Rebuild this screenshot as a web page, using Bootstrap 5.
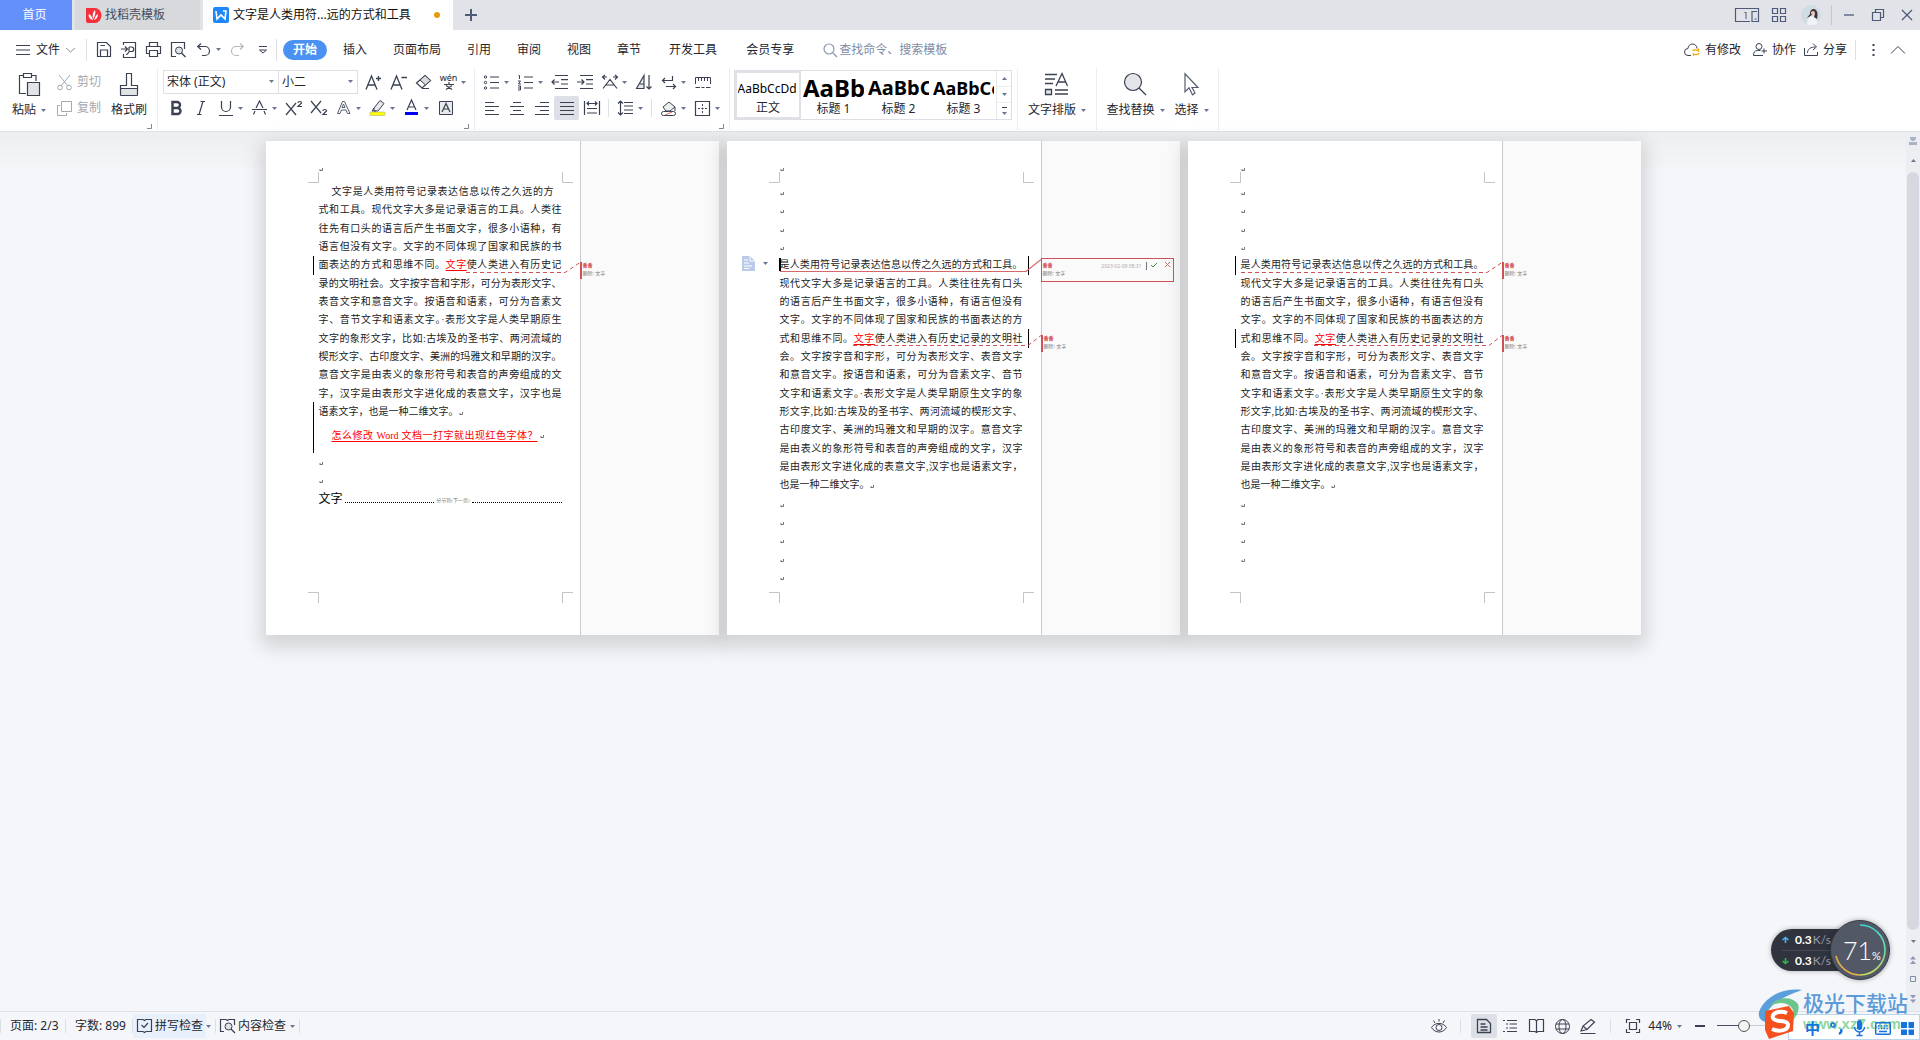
<!DOCTYPE html>
<html lang="zh-CN">
<head>
<meta charset="utf-8">
<meta name="viewport" content="width=device-width, initial-scale=1">
<title>WPS 文字</title>
<link rel="stylesheet" href="https://cdn.jsdelivr.net/npm/bootstrap@5.3.0/dist/css/bootstrap.min.css">
<style>
body{font:12px/18px "Noto Sans","Noto Sans CJK SC",sans-serif;color:#23262f;background:#f5f6f9;overflow:hidden}
button,input,select{font:inherit;color:inherit}
button{background:none;border:0;padding:0}
svg{display:block;flex:none;fill:none;stroke:#3a4152;overflow:visible}
.thin{width:1px;background:#dcdfe4;flex:none}
/* title bar */
.titlebar{height:30px;background:#e1e3e8}
.doc-tab{height:30px;gap:4px}
.tab-home{width:72px;background:#6490fb;color:#fff;padding-right:3px}
.tab-shell{width:125px;background:#d7d9dd;color:#474d5b;padding-left:11px;margin:0 3px}
.tab-doc{width:250px;background:#fff;color:#111;padding:0 13px 0 10px}
.dirty{width:6px;height:6px;border-radius:50%;background:#e99a0c}
.titlebar svg{stroke:#4d5b78}
.win{gap:18px;padding-right:8px}
/* menu row */
.menu-row{height:38px;background:#fff;padding-top:1px}
.quick{padding-left:4px;width:189px}
.quick button{width:25px;height:26px;display:flex;align-items:center;justify-content:center}
.menu-link{padding:0 13px;color:#23262f;text-decoration:none}
.menu-link.on{background:#4991f2;color:#fff;font-weight:700;border-radius:10px;padding:1px 10px;margin:0 3px}
.menu-link.wide{padding:0 14px 0 15px}
.cmd-search{border:0;outline:0;width:140px;padding:0;background:none;color:#7f8ba3}
.cmd-search::placeholder{color:#7f8ba3;opacity:1}
/* ribbon */
.ribbon{height:64px;background:#fff;border-bottom:1px solid #e0e2e5}
.grp{border-right:1px solid #eceef1;height:62px;position:relative;flex:none}
.corner-btn{position:absolute;right:5px;bottom:1px}
.ib{width:25px;height:24px;display:flex;align-items:center;justify-content:center;flex:none}
.ib.on{background:#dde1e7;border-radius:2px}
.dd{width:9px;height:24px;display:flex;align-items:center;flex:none}
.slot{width:9px;height:18px;display:flex;justify-content:center}
.big{display:flex;flex-direction:column;align-items:center;gap:5px;padding-top:5px}
.lab{display:flex;align-items:center;gap:5px;white-space:nowrap}
.off{color:#a6a8ad}
.off svg{stroke:#a6a8ad}
.combo{height:24px;border:1px solid #dddfe3;background:#fff;border-radius:0;outline:0;appearance:none;padding:0 3px}
.combo-wrap{position:relative}
.combo-wrap svg{position:absolute;right:5px;top:10px}
.gallery{border:1px solid #dddfe4;height:50px;width:278px;margin:2px 5px 0 4px}
.sty{width:65px;height:48px;display:flex;flex-direction:column;align-items:center;overflow:hidden;color:#23262f;flex:none}
.sty.on{border:2px solid #dfe1e6;width:66px}
.sample{height:29px;line-height:34px;color:#000;width:61px;overflow:hidden;white-space:nowrap;font-weight:700;text-align:left}
.sty.on .sample{font-size:12px;font-weight:400;height:27px;line-height:31px}
.s1{font-size:24px}.s2{font-size:20px}.s3{font-size:18px}
.spin{width:15px;border-left:1px solid #e6e8ec}
.spin button{height:16px;width:14px;display:flex;align-items:center;justify-content:center;border-bottom:1px solid #eceef1}
.flip{rotate:180deg}
.pinyin{font-size:9px;line-height:8px}
/* paper */
.desk{padding-top:9px;gap:8px;background:linear-gradient(#eceef0,#f5f6f9 40px)}
.paper{width:453px;height:494px;background:#fff;box-shadow:0 7px 18px 5px rgba(0,0,0,.14);position:relative}
.sheet{width:314px;padding:26px 0 0 53px}
.notes{background:#fafafa;border-left:1px solid #c9cbce;padding-top:121px}
.copy{width:243px;font-family:"Liberation Serif","Noto Sans CJK SC",serif;font-size:10px;color:#222}
.rows{display:grid;grid-auto-rows:1fr;margin-top:11px}
.r13{height:238px}.r21{height:385px}.r22{height:403px}
.rows>div{display:flex;align-items:center;white-space:nowrap;line-height:18px}
.rows svg{margin-top:3px}
.rows span{width:243px;text-align:justify;text-align-last:justify}
.rows .first{width:222px;margin-left:13px}
.rows .end{width:auto;text-align-last:left}
.ins{color:#f00;text-decoration:underline;text-underline-offset:2px}
.red-line{padding:6px 0 12px 13px;height:36px;gap:2px}
.red-line .ins{width:206px;white-space:nowrap;text-align-last:justify}
.blank-rows{padding:4px 0 6px}
.blank-rows svg+svg{margin-top:13px}
.section-row{height:18px;font-size:12px;color:#000;gap:2px}
.section-row i{flex:1;border-top:1px dotted #000;margin-top:7px}
.section-row small{font-size:5px;color:#777;margin-top:4px}
.memo{height:17px;border-left:2px solid #cf5157;padding-left:1px;font-size:5px;line-height:8px;color:#777;margin-bottom:56px;margin-left:-1px}
.memo b{color:#cc3038;display:block;line-height:7px}
.memo.open{border:1px solid #cf5157;width:133px;height:24px;margin:-4px 0 53px -1px;padding:3px 3px 0 1px}
.memo time{color:#aaa}
.ink{position:absolute;left:0;top:0;pointer-events:none}
.anchor{position:absolute;left:15px;top:115px}
/* scroll bar */
.rail{width:14px;background:#eceef2;padding-top:5px}
.rail .thumb{width:12px;background:#d5d8e1;border-radius:6px}
.rail svg{fill:#8d99b5;stroke:none}
/* status bar */
.status{height:29px;border-top:1px solid #dfe1e6;background:#f5f6f9}
.status .thin{height:14px}
.status .ib{width:26px}
.zoom{appearance:none;width:92px;height:14px;margin-left:12px;background:linear-gradient(#434d66,#434d66) 0 6px/24px 1px no-repeat,linear-gradient(#c9ccd4,#c9ccd4) 0 6px/100% 1px no-repeat}
.zoom::-webkit-slider-thumb{appearance:none;width:12px;height:12px;border:1px solid #555;border-radius:50%;background:#f3f3f3}
/* floating desktop widgets */
.meter{position:absolute;right:30px;bottom:60px;width:119px;height:60px}
.meter .speeds{width:90px;height:42px;border-radius:21px 0 0 21px;background:#2f343f;color:#fff;padding:1px 0 0 11px;box-shadow:0 0 5px rgba(0,0,0,.3)}
.speeds div{height:20px;gap:6px;line-height:20px;font-family:Lato,sans-serif;font-weight:700}
.speeds div+div{border-top:1px solid #454a55}
.speeds em{font-style:normal;font-weight:400;color:#9a9ea8;margin-left:1px}
.ball{position:absolute;right:0;top:0;width:60px;height:60px;border-radius:50%;background:#525866;border:1px solid #353a46;box-shadow:0 0 5px rgba(0,0,0,.35);color:#fff;font:300 25px/58px Lato,sans-serif;padding-left:12px}
.ball small{font-size:11px;font-weight:400}
.ball svg{position:absolute;left:3px;top:3px}
.mark-box{position:absolute;right:0;bottom:0;width:162px;height:52px}
.mark-name{position:absolute;left:45px;top:0;font:500 21px/28px "Noto Sans CJK SC",sans-serif;color:#5b9bd8;white-space:nowrap}
.mark-url{position:absolute;left:45px;top:26px;font:700 15px/20px "Liberation Sans",sans-serif;color:#8fd6a2}
.ime{position:absolute;right:0;bottom:0;width:132px;height:26px;background:linear-gradient(90deg,#fff,#fbfcff);border:1px solid #b9d5ee}
.ime-keys{position:absolute;right:6px;bottom:2px;gap:10px;color:#1673dc;font:700 15px/20px "Noto Sans CJK SC",sans-serif}
</style>
<script src="https://cdn.jsdelivr.net/npm/bootstrap@5.3.0/dist/js/bootstrap.bundle.min.js"></script>
</head>
<body>
<svg width="0" height="0" class="position-absolute">
<symbol id="car" viewBox="0 0 5 3"><path d="M0 0h5L2.500 3z" fill="#6b7690" stroke="none"/></symbol>
<symbol id="ret" viewBox="0 0 5 5"><path d="M3.500 1v2.500H1M1 2v2" stroke="#666" stroke-width=".9"/></symbol>
<symbol id="cnr" viewBox="0 0 5 5"><path d="M4.500 0v4.500H0" stroke="#7d8799"/></symbol>
</svg>
<div class="vh-100 d-flex flex-column position-relative">

<header class="titlebar d-flex">
  <button class="doc-tab tab-home">首页</button>
  <button class="doc-tab tab-shell d-flex align-items-center">
    <svg width="15" height="15"><path d="M0 0h9a6 7 0 0 1 0 15H2a2 2 0 0 1-2-2z" fill="#f5303d" stroke="none"/><path d="M7 12C3 11 2 8 3 6c2 1 3 3 4 6zM7 11C6 7 7 4 9 2c1 3 0 6-2 9zM8 12c1-3 2-5 4-6 0 3-1 5-4 6z" fill="#fff" stroke="none"/></svg>
    <span>找稻壳模板</span></button>
  <button class="doc-tab tab-doc d-flex align-items-center">
    <svg width="16" height="16"><rect width="16" height="16" rx="2" fill="#1e88fb" stroke="none"/><path d="M3 4l1 8 4-4 4 4 1-8h-3" stroke="#fff" stroke-width="1.600"/></svg>
    <span>文字是人类用符...远的方式和工具</span><span class="dirty ms-auto"></span></button>
  <button class="ms-2 px-1" aria-label="新建"><svg width="12" height="12"><path d="M6 0v12M0 6h12" stroke-width="2"/></svg></button>
  <div class="win d-flex align-items-center ms-auto">
    <button aria-label="窗口">
      <svg width="24" height="14"><path d="M15 13.500H.5V.5h23v13H17V3.500h5" stroke-width="1.200"/><path d="M11 4v7M9.500 4.500H11M19.500 11h2" /></svg></button>
    <svg width="14" height="14" style="margin:0 -3px 0 -5px"><path d="M.5.5h5v5h-5zM8.500.5h5v5h-5zM.5 8.500h5v5h-5zM8.500 8.500h5v5h-5z" stroke-width="1.200"/></svg>
    <svg width="20" height="20" style="margin:0 -8px 0 0"><circle cx="10" cy="10" r="10" fill="#cfdde2" stroke="none"/><path d="M6 20c0-5 1-8 3-9l5 1 3 6-4 2z" fill="#eef3f5" stroke="none"/><path d="M9 9c0-4 2-5 4-5 4 1 4 6 3 10l-3-2 1-3-2 0-4 3-2 1z" fill="#3c3338" stroke="none"/><circle cx="12" cy="8" r="2" fill="#eac5b8" stroke="none"/></svg>
    <span class="thin" style="height:20px;background:#c3c7cf"></span>
    <button aria-label="最小化" style="margin-left:-6px"><svg width="10" height="10"><path d="M0 5h10" stroke-width="1.300"/></svg></button>
    <button aria-label="还原"><svg width="12" height="12"><path d="M.5 3.500h8v8h-8zM3.500 3V.5h8v8H9" stroke-width="1.200"/></svg></button>
    <button aria-label="关闭"><svg width="10" height="10"><path d="M0 0l10 10M10 0L0 10" stroke-width="1.300"/></svg></button>
  </div>
</header>

<nav class="menu-row d-flex align-items-center">
  <button class="d-flex align-items-center ps-3" style="gap:6px;width:86px">
    <svg width="14" height="12"><path d="M0 1.500h14M0 6h14M0 10.500h14"/></svg>文件
    <svg width="9" height="6"><path d="M0 1l4.500 4L9 1" stroke="#8a909c"/></svg></button>
  <span class="thin" style="height:22px"></span>
  <div class="quick d-flex">
    <button aria-label="保存"><svg width="15" height="15"><path d="M1.500.5h9l4 4v10h-13zM4.500 14v-6h7v6M4.500 3.500H9" stroke-width="1.200"/></svg></button>
    <button aria-label="输出为PDF"><svg width="16" height="16"><path d="M2.500 3V.5h12v15h-12V12M0 7h6M4 4.500L6.500 7 4 9.500M8 5h2.500a2 2 0 0 1 0 4.500h-2c-1 0-1 3-3.500 3M8 5v4" stroke-width="1.200"/></svg></button>
    <button aria-label="打印"><svg width="15" height="15"><path d="M3.500 4V.5h8V4M3 11.500H.5v-7h14v7H12M3.500 8.500h8v6h-8z" stroke-width="1.200"/></svg></button>
    <button aria-label="打印预览"><svg width="15" height="15"><path d="M5 14.500H.5V.5h13V7" stroke-width="1.200"/><circle cx="8" cy="8.500" r="3.500" fill="#dfe1e5"/><path d="M10.500 11l4 4" stroke-width="1.400"/></svg></button>
    <button aria-label="撤销"><svg width="13" height="13"><path d="M4 .5L.7 3.500 4 6.500M1 3.500h7a4 4 0 0 1 0 9H5" stroke-width="1.200"/></svg></button>
    <span class="dd align-self-center"><svg width="5" height="3"><use href="#car"/></svg></span>
    <button aria-label="恢复"><svg width="13" height="13"><path d="M9 .5l3.300 3L9 6.500M12 3.500H5a4 4 0 0 0 0 9h3" stroke="#b5b8be" stroke-width="1.200"/></svg></button>
    <button aria-label="自定义"><svg width="8" height="8"><path d="M0 .5h8M.5 4h7L4 7z"/></svg></button>
  </div>
  <span class="thin" style="height:22px;margin-right:3px"></span>
  <a class="menu-link on" href="#">开始</a><a class="menu-link" href="#">插入</a><a class="menu-link" href="#">页面布局</a><a class="menu-link" href="#">引用</a><a class="menu-link" href="#">审阅</a><a class="menu-link" href="#">视图</a><a class="menu-link" href="#">章节</a><a class="menu-link wide" href="#">开发工具</a><a class="menu-link wide" href="#">会员专享</a>
  <label class="d-flex align-items-center" style="gap:2px;margin-left:15px"><svg width="14" height="14"><circle cx="6" cy="6" r="5" stroke="#8c98b0" stroke-width="1.200"/><path d="M10 10l4 4" stroke="#8c98b0" stroke-width="1.300"/></svg><input class="cmd-search" placeholder="查找命令、搜索模板" aria-label="查找命令"></label>
  <div class="d-flex align-items-center ms-auto gap-2" style="padding-right:15px">
    <button class="lab"><svg width="16" height="14"><path d="M7 12.500H4a3.500 3.500 0 0 1 0-7 4.500 4.500 0 0 1 9 0" /><path d="M8.500 8a4 3 0 0 1 6 0V5.500M15.500 10a4 3 0 0 1-6 1v2" stroke="#f5a800" stroke-width="1.300"/></svg>有修改</button>
    <button class="lab ms-1"><svg width="14" height="13"><circle cx="6" cy="3.500" r="3"/><path d="M10 12.500H.5c0-3 1-5 4-5h3M11 5.500v5M8.500 8H14"/></svg>协作</button>
    <button class="lab"><svg width="14" height="13"><path d="M.5 5v7.500h13V9M3.500 10c0-4 3-6 8-6M9 .5L12.500 4 9 7"/></svg>分享</button>
    <span class="thin" style="height:20px"></span>
    <button class="px-2" aria-label="更多"><svg width="3" height="12"><path d="M1.500 0v2M1.500 5v2M1.500 10v2" stroke-width="2"/></svg></button>
    <button aria-label="折叠功能区"><svg width="14" height="8"><path d="M0 7.500l7-7 7 7"/></svg></button>
  </div>
</nav>

<section class="ribbon d-flex">
  <div class="grp d-flex" style="width:158px;padding-left:11px">
    <button class="big" style="width:36px"><svg width="21" height="23"><path d="M7 20.500H.5v-18h4M13 2.500h4V8M4.500.5h8v4h-8z" stroke-width="1.200"/><path d="M8.500 9.500h12v13h-12z" fill="#e1e3e6" stroke-width="1.200"/></svg><span class="lab">粘贴<svg width="5" height="3"><use href="#car"/></svg></span></button>
    <div class="d-flex flex-column" style="padding:5px 0 0 10px;gap:8px;width:64px">
      <button class="lab off"><svg width="15" height="15"><path d="M2 0l9 11M13 0L4 11"/><circle cx="3" cy="12.500" r="2.300"/><circle cx="12" cy="12.500" r="2.300"/></svg>剪切</button>
      <button class="lab off"><svg width="15" height="15"><path d="M4.500.5h10v10h-10zM3 4.500H.5v10h9V12"/></svg>复制</button>
    </div>
    <button class="big"><svg width="18" height="23"><path d="M.5 15.500h17v7H.5z" fill="#e1e3e6"/><path d="M.5 22V12.500h6V.5h5v12h6V22" stroke-width="1.200"/></svg>格式刷</button>
    <svg class="corner-btn" width="5" height="5"><use href="#cnr"/></svg>
  </div>
  <div class="grp" style="width:317px;padding-left:5px">
    <div class="d-flex" style="margin-top:2px">
      <label class="combo-wrap"><select class="combo" style="width:116px" aria-label="字体"><option>宋体 (正文)</option></select><svg width="5" height="3"><use href="#car"/></svg></label>
      <label class="combo-wrap" style="margin:0 3px 0 -1px"><select class="combo" style="width:80px" aria-label="字号"><option>小二</option></select><svg width="5" height="3"><use href="#car"/></svg></label>
      <button class="ib" aria-label="增大字号"><svg width="15" height="15"><path d="M0 14.500L5.500 1 11 14.500M2 10h7M10 3.500h5M12.500 1v5" stroke-width="1.300"/></svg></button>
      <button class="ib" aria-label="减小字号"><svg width="15" height="15"><path d="M0 14.500L5.500 1 11 14.500M2 10h7M10.500 2.500H16" stroke-width="1.300"/></svg></button>
      <button class="ib" aria-label="清除格式"><svg width="15" height="14"><path d="M.5 8L9 .5l5.500 5L6 13z" stroke-width="1.200"/><path d="M4 5l5.500 5 5-4.500L9 .5z" fill="#d8dade"/><path d="M6 13.500h7"/></svg></button>
      <button class="ib flex-column pinyin" aria-label="拼音指南">wén<svg width="10" height="8"><path d="M5 0v2M0 2.500h10M2 3.500l6 4M8 3.500l-6 4" stroke-width="1.200"/></svg></button>
      <span class="dd"><svg width="5" height="3"><use href="#car"/></svg></span>
    </div>
    <div class="d-flex" style="margin-top:2px">
      <button class="ib" aria-label="加粗"><svg width="10" height="14"><path d="M1.500 1h4.500a2.800 2.800 0 0 1 0 6H1.500zM1.500 7h5a3 3 0 0 1 0 6h-5z" stroke-width="2.400"/></svg></button>
      <button class="ib" aria-label="倾斜"><svg width="8" height="14"><path d="M3.500.5H8M0 13.500h4.500M6 .5L2 13.500" stroke-width="1.200"/></svg></button>
      <button class="ib" aria-label="下划线"><svg width="14" height="15"><path d="M2.500 0v6a4.500 4.500 0 0 0 9 0V0M0 14.500h14" stroke-width="1.200"/></svg></button><span class="dd"><svg width="5" height="3"><use href="#car"/></svg></span>
      <button class="ib" aria-label="删除线"><svg width="15" height="14"><path d="M4 7l3.500-7L11 7M0 8.500h15M3 10l-1.500 3.500M12 10l1.500 3.500" stroke-width="1.200"/></svg></button><span class="dd"><svg width="5" height="3"><use href="#car"/></svg></span>
      <button class="ib" aria-label="上标"><svg width="16" height="14"><path d="M0 2l10 12M10 2L0 14M12 2c0-2 3.500-2 3.500 0L12 5.500h4" stroke-width="1.200"/></svg></button>
      <button class="ib" aria-label="下标"><svg width="16" height="14"><path d="M0 0l10 12M10 0L0 12M12 10c0-2 3.500-2 3.500 0L12 13.500h4" stroke-width="1.200"/></svg></button>
      <button class="ib" aria-label="文字效果"><svg width="14" height="14"><path d="M.5 12.500L5.500.5h2l5.500 12h-2.500L9 9H4.500L3 12.500zM5 6.500h3L6.500 3z" stroke="#555d6e"/></svg></button><span class="dd"><svg width="5" height="3"><use href="#car"/></svg></span>
      <button class="ib" aria-label="突出显示"><svg width="15" height="16"><path d="M4 8l6-7.500 4 3L8 11H4zM4 8L2 11h4" fill="#e6e8eb"/><rect y="12" width="15" height="3.500" rx="1" fill="#ff0" stroke="#999" stroke-width=".5"/></svg></button><span class="dd"><svg width="5" height="3"><use href="#car"/></svg></span>
      <button class="ib" aria-label="字体颜色"><svg width="13" height="16"><path d="M2 10L6.500 0 11 10M4 7h5" stroke-width="1.200"/><rect y="12" width="13" height="3" fill="#00f" stroke="none"/></svg></button><span class="dd"><svg width="5" height="3"><use href="#car"/></svg></span>
      <button class="ib" aria-label="字符底纹"><svg width="14" height="14"><path d="M.5.5h13v13H.5z" fill="#e8eaec"/><path d="M3 11l4-8.500L11 11M4.500 8h5" stroke-width="1.200"/></svg></button>
    </div>
    <svg class="corner-btn" width="5" height="5"><use href="#cnr"/></svg>
  </div>
  <div class="grp" style="width:255px;padding-left:4px">
    <div class="d-flex" style="margin-top:2px">
      <button class="ib" aria-label="项目符号"><svg width="15" height="15"><path d="M6 2h9M6 7.500h9M6 13h9" stroke-width="1.200"/><circle cx="1.500" cy="2" r="1.200"/><circle cx="1.500" cy="7.500" r="1.200"/><circle cx="1.500" cy="13" r="1.200"/></svg></button><span class="dd"><svg width="5" height="3"><use href="#car"/></svg></span>
      <button class="ib" aria-label="编号"><svg width="15" height="15"><path d="M6 2h9M6 7.500h9M6 13h9" stroke-width="1.200"/><path d="M.5.5h1v3.500M0 6h2.500L.5 9H3M0 11h2.500v4H0M0 13h2"/></svg></button><span class="dd"><svg width="5" height="3"><use href="#car"/></svg></span>
      <button class="ib" aria-label="减少缩进"><svg width="16" height="14"><path d="M3 .5h13M9 4.700h7M9 9h7M3 13.500h13M0 7h7M2.500 4.500L0 7l2.500 2.500" stroke-width="1.200"/></svg></button>
      <button class="ib" aria-label="增加缩进"><svg width="16" height="14"><path d="M3 .5h13M9 4.700h7M9 9h7M3 13.500h13M0 7h7M4.500 4.500L7 7 4.500 9.500" stroke-width="1.200"/></svg></button>
      <button class="ib" aria-label="中文版式"><svg width="16" height="14"><path d="M1 13.500l7-9 7 9M4 10h8M5 2H.5M3 0L.5 2 3 4.500M11 2h4.500M13 0l2.500 2L13 4.500" stroke-width="1.200"/></svg></button><span class="dd"><svg width="5" height="3"><use href="#car"/></svg></span>
      <button class="ib" aria-label="排序"><svg width="16" height="15"><path d="M.5 13.500L8 .5v13zM4 9h4" fill="#e6e8eb" stroke-width="1.200"/><path d="M13 0v14M10.500 11.500L13 14l2.500-2.500" stroke-width="1.200"/></svg></button>
      <button class="ib" aria-label="显示标记"><svg width="14" height="13"><path d="M10.500 0v4.500H.5M3 2L.5 4.500 3 7M4 10.500h9M11 8l2.500 2.500L11 13" stroke-width="1.200"/></svg></button><span class="dd"><svg width="5" height="3"><use href="#car"/></svg></span>
      <button class="ib" aria-label="制表位"><svg width="16" height="11"><path d="M.5 7V.5h15V7M3.500 1v3M6.500 1v3M9.500 1v3M12.500 1v3M.5 10.500H5M6.500 10.500h3M11 10.500h4.500"/></svg></button>
    </div>
    <div class="d-flex align-items-center" style="margin-top:2px">
      <button class="ib" aria-label="左对齐"><svg width="14" height="13"><path d="M0 .5h9M0 4.500h14M0 8.500h9M0 12.500h14" stroke-width="1.200"/></svg></button>
      <button class="ib" aria-label="居中"><svg width="14" height="13"><path d="M3 .5h8M0 4.500h14M3 8.500h8M0 12.500h14" stroke-width="1.200"/></svg></button>
      <button class="ib" aria-label="右对齐"><svg width="14" height="13"><path d="M5 .5h9M0 4.500h14M5 8.500h9M0 12.500h14" stroke-width="1.200"/></svg></button>
      <button class="ib on" aria-label="两端对齐"><svg width="14" height="13"><path d="M0 .5h14M0 4.500h14M0 8.500h14M0 12.500h14" stroke-width="1.200"/></svg></button>
      <button class="ib" aria-label="分散对齐"><svg width="16" height="14"><path d="M.5 0v14M15.500 0v14M3 7.500h10M3 12h10M3 2.500h10M5 .5L3 2.500l2 2M11 .5l2 2-2 2" stroke-width="1.200"/></svg></button>
      <span class="slot"><span class="thin"></span></span>
      <button class="ib" aria-label="行距"><svg width="15" height="14"><path d="M6 1.500h9M6 5h9M6 9h9M6 12.500h9M2.500 0v14M0 2.500L2.500 0 5 2.500M0 11.500L2.500 14 5 11.500" stroke-width="1.200"/></svg></button><span class="dd"><svg width="5" height="3"><use href="#car"/></svg></span>
      <span class="slot"><span class="thin"></span></span>
      <button class="ib" aria-label="底纹"><svg width="16" height="15"><path d="M2 6l6-5 6 5-5 4H5z" fill="#eceef0"/><path d="M14 6v4" /><rect x=".5" y="10.500" width="14" height="4" rx="2" fill="#fff"/><path d="M4 14l7-3" stroke="#e66"/></svg></button><span class="dd"><svg width="5" height="3"><use href="#car"/></svg></span>
      <button class="ib" aria-label="边框"><svg width="15" height="15"><path d="M.5.5h14v14H.5z" stroke-width="1.200"/><path d="M7.500 3v9M3 7.500h9" stroke-dasharray="2 1.500"/></svg></button><span class="dd"><svg width="5" height="3"><use href="#car"/></svg></span>
    </div>
    <svg class="corner-btn" width="5" height="5"><use href="#cnr"/></svg>
  </div>
  <div class="grp">
    <div class="gallery d-flex">
      <button class="sty on"><span class="sample">AaBbCcDd</span><span>正文</span></button>
      <button class="sty"><span class="sample s1">AaBbCc</span><span>标题 1</span></button>
      <button class="sty"><span class="sample s2">AaBbCc</span><span>标题 2</span></button>
      <button class="sty"><span class="sample s3">AaBbCc</span><span>标题 3</span></button>
      <div class="spin"><button aria-label="上"><svg class="flip" width="5" height="3"><use href="#car"/></svg></button><button aria-label="下"><svg width="5" height="3"><use href="#car"/></svg></button><button aria-label="展开" class="flex-column border-0 gap-1"><svg width="5" height="1"><path d="M0 .5h5"/></svg><svg width="5" height="3"><use href="#car"/></svg></button></div>
    </div>
  </div>
  <div class="grp d-flex justify-content-center" style="width:79px">
    <button class="big"><svg width="24" height="23"><path d="M0 1.500h12M0 6h10M0 10.500h8M11 13L17 .5 22.500 13M13 9h8M10 17h13M10 21h13" stroke-width="1.300"/><path d="M.5 16.500h6v5h-6z" fill="#e1e3e6" stroke-width="1.300"/></svg><span class="lab">文字排版<svg width="5" height="3"><use href="#car"/></svg></span></button>
  </div>
  <div class="grp d-flex justify-content-center" style="width:122px;gap:10px">
    <button class="big"><svg width="22" height="23"><circle cx="9" cy="9" r="8.500" fill="#e3e5e8" stroke-width="1.200"/><path d="M15 15l7 7" stroke-width="1.300"/></svg><span class="lab">查找替换<svg width="5" height="3"><use href="#car"/></svg></span></button>
    <button class="big"><svg width="15" height="23"><path d="M1 .8v18l4-4 3.500 7L11 20l-3-5.500h6z" stroke="#555d70" stroke-width="1.200"/></svg><span class="lab">选择<svg width="5" height="3"><use href="#car"/></svg></span></button>
  </div>
</section>

<div class="d-flex flex-fill" style="min-height:0">
<main class="desk d-flex flex-fill justify-content-center align-items-start">
  <article class="paper d-flex">
    <div class="sheet"><div class="copy">
      <svg width="5" height="5"><use href="#ret"/></svg>
      <div class="rows r13">
        <div><span class="first">文字是人类用符号记录表达信息以传之久远的方</span></div>
        <div><span>式和工具。现代文字大多是记录语言的工具。人类往</span></div>
        <div><span>往先有口头的语言后产生书面文字，很多小语种，有</span></div>
        <div><span>语言但没有文字。文字的不同体现了国家和民族的书</span></div>
        <div><span>面表达的方式和思维不同。<a class="ins" href="#">文字</a>使人类进入有历史记</span></div>
        <div><span>录的文明社会。文字按字音和字形，可分为表形文字、</span></div>
        <div><span>表音文字和意音文字。按语音和语素，可分为音素文</span></div>
        <div><span>字、音节文字和语素文字。·表形文字是人类早期原生</span></div>
        <div><span>文字的象形文字，比如:古埃及的圣书字、两河流域的</span></div>
        <div><span>楔形文字、古印度文字、美洲的玛雅文和早期的汉字。</span></div>
        <div><span>意音文字是由表义的象形符号和表音的声旁组成的文</span></div>
        <div><span>字，汉字是由表形文字进化成的表意文字，汉字也是</span></div>
        <div><span class="end">语素文字，也是一种二维文字。</span><svg width="5" height="5"><use href="#ret"/></svg></div>
      </div>
      <div class="red-line d-flex align-items-center"><span class="ins">怎么修改 Word 文档一打字就出现红色字体？</span><svg width="5" height="5"><use href="#ret"/></svg></div>
      <div class="blank-rows"><svg width="5" height="5"><use href="#ret"/></svg><svg width="5" height="5"><use href="#ret"/></svg></div>
      <div class="section-row d-flex align-items-center">文字<i></i><small>分节符(下一页)</small><i></i></div>
    </div></div>
    <aside class="notes flex-fill"><div class="memo"><b>香香</b>删除: 文字</div></aside>
    <svg class="ink" width="453" height="494"><path d="M42 41.500h10.500V31M307 41.500h-10.500V31M42 451.500h10.500V462M307 451.500h-10.500V462" stroke="#c4c4c4"/><path d="M47.500 115v19M47.500 261v51" stroke="#000"/><path d="M200 131.500h99l15-10" stroke="#cf5157" stroke-dasharray="4 3"/></svg>
  </article>

  <article class="paper d-flex">
    <div class="sheet"><div class="copy">
      <svg width="5" height="5"><use href="#ret"/></svg>
      <div class="rows r22">
        <div><svg width="5" height="5"><use href="#ret"/></svg></div><div><svg width="5" height="5"><use href="#ret"/></svg></div><div><svg width="5" height="5"><use href="#ret"/></svg></div><div><svg width="5" height="5"><use href="#ret"/></svg></div>
        <div><span>是人类用符号记录表达信息以传之久远的方式和工具。</span></div>
        <div><span>现代文字大多是记录语言的工具。人类往往先有口头</span></div>
        <div><span>的语言后产生书面文字，很多小语种，有语言但没有</span></div>
        <div><span>文字。文字的不同体现了国家和民族的书面表达的方</span></div>
        <div><span>式和思维不同。<a class="ins" href="#">文字</a>使人类进入有历史记录的文明社</span></div>
        <div><span>会。文字按字音和字形，可分为表形文字、表音文字</span></div>
        <div><span>和意音文字。按语音和语素，可分为音素文字、音节</span></div>
        <div><span>文字和语素文字。·表形文字是人类早期原生文字的象</span></div>
        <div><span>形文字,比如:古埃及的圣书字、两河流域的楔形文字、</span></div>
        <div><span>古印度文字、美洲的玛雅文和早期的汉字。意音文字</span></div>
        <div><span>是由表义的象形符号和表音的声旁组成的文字，汉字</span></div>
        <div><span>是由表形文字进化成的表意文字,汉字也是语素文字，</span></div>
        <div><span class="end">也是一种二维文字。</span><svg width="5" height="5"><use href="#ret"/></svg></div>
        <div><svg width="5" height="5"><use href="#ret"/></svg></div><div><svg width="5" height="5"><use href="#ret"/></svg></div><div><svg width="5" height="5"><use href="#ret"/></svg></div><div><svg width="5" height="5"><use href="#ret"/></svg></div><div><svg width="5" height="5"><use href="#ret"/></svg></div>
      </div>
    </div></div>
    <aside class="notes flex-fill">
      <div class="memo open d-flex justify-content-between"><div><b>香香</b>删除: 文字</div><div class="d-flex gap-1"><time>2023-02-09 08:31</time><svg width="1" height="8"><path d="M.5 0v8" stroke="#777"/></svg><svg width="6" height="6"><path d="M0 3l2 2 4-4" stroke="#3a9b4a"/></svg><svg width="5" height="5" class="ms-1"><path d="M0 0l5 5M5 0L0 5" stroke="#d9666b"/></svg></div></div>
      <div class="memo"><b>香香</b>删除: 文字</div>
    </aside>
    <svg class="ink" width="453" height="494"><path d="M42 41.500h10.500V31M307 41.500h-10.500V31M42 451.500h10.500V462M307 451.500h-10.500V462" stroke="#c4c4c4"/><path d="M301.500 115v19M301.500 188v19" stroke="#000"/><path d="M53 117v13" stroke="#000" stroke-width="2"/><path d="M53 130.500h246l15-12" stroke="#d4686d" stroke-width="1.200"/><path d="M126 204.500h175l13-10" stroke="#cf5157" stroke-dasharray="4 3"/></svg>
    <button class="anchor d-flex align-items-center gap-2" aria-label="段落布局"><svg width="13" height="15"><path d="M0 0h8l5 5v10H0z" fill="#b9cbe8" stroke="none"/><path d="M2 4h4M2 7h5M2 10h8M2 12.500h5M8 0v5h5" stroke="#fff"/></svg><svg width="5" height="3"><use href="#car"/></svg></button>
  </article>

  <article class="paper d-flex">
    <div class="sheet"><div class="copy">
      <svg width="5" height="5"><use href="#ret"/></svg>
      <div class="rows r21">
        <div><svg width="5" height="5"><use href="#ret"/></svg></div><div><svg width="5" height="5"><use href="#ret"/></svg></div><div><svg width="5" height="5"><use href="#ret"/></svg></div><div><svg width="5" height="5"><use href="#ret"/></svg></div>
        <div><span>是人类用符号记录表达信息以传之久远的方式和工具。</span></div>
        <div><span>现代文字大多是记录语言的工具。人类往往先有口头</span></div>
        <div><span>的语言后产生书面文字，很多小语种，有语言但没有</span></div>
        <div><span>文字。文字的不同体现了国家和民族的书面表达的方</span></div>
        <div><span>式和思维不同。<a class="ins" href="#">文字</a>使人类进入有历史记录的文明社</span></div>
        <div><span>会。文字按字音和字形，可分为表形文字、表音文字</span></div>
        <div><span>和意音文字。按语音和语素，可分为音素文字、音节</span></div>
        <div><span>文字和语素文字。·表形文字是人类早期原生文字的象</span></div>
        <div><span>形文字,比如:古埃及的圣书字、两河流域的楔形文字、</span></div>
        <div><span>古印度文字、美洲的玛雅文和早期的汉字。意音文字</span></div>
        <div><span>是由表义的象形符号和表音的声旁组成的文字，汉字</span></div>
        <div><span>是由表形文字进化成的表意文字,汉字也是语素文字，</span></div>
        <div><span class="end">也是一种二维文字。</span><svg width="5" height="5"><use href="#ret"/></svg></div>
        <div><svg width="5" height="5"><use href="#ret"/></svg></div><div><svg width="5" height="5"><use href="#ret"/></svg></div><div><svg width="5" height="5"><use href="#ret"/></svg></div><div><svg width="5" height="5"><use href="#ret"/></svg></div>
      </div>
    </div></div>
    <aside class="notes flex-fill"><div class="memo"><b>香香</b>删除: 文字</div><div class="memo"><b>香香</b>删除: 文字</div></aside>
    <svg class="ink" width="453" height="494"><path d="M42 41.500h10.500V31M307 41.500h-10.500V31M42 451.500h10.500V462M307 451.500h-10.500V462" stroke="#c4c4c4"/><path d="M47.500 115v19M47.500 188v19" stroke="#000"/><path d="M53 131.500h246l15-10M126 204.500h175l13-10" stroke="#cf5157" stroke-dasharray="4 3"/></svg>
  </article>
</main>
<div class="rail d-flex flex-column align-items-center">
  <svg width="8" height="9"><path d="M1 0h6v2L5 4H3L1 2zM0 5h8v3H0z" opacity=".7"/></svg>
  <svg class="flip" width="5" height="3" style="margin:13px 0 10px"><use href="#car"/></svg>
  <div class="thumb flex-fill"></div>
  <svg width="5" height="3" style="margin:10px 0 13px"><use href="#car"/></svg>
  <svg width="6" height="8"><path d="M0 3.500L3 0l3 3.500zM0 8l3-3.500L6 8z"/></svg>
  <svg width="6" height="6" style="margin:12px 0 13px"><path d="M.5.5h5v5h-5z" fill="none" stroke="#7d8aa8"/></svg>
  <svg width="6" height="8" style="margin-bottom:8px"><path d="M0 0l3 3.500L6 0zM0 4.500L3 8l3-3.500z"/></svg>
</div>
</div>

<footer class="status d-flex align-items-center">
  <span class="thin"></span><span style="width:64px;padding-left:9px">页面: 2/3</span><span class="thin"></span>
  <span style="width:66px;padding-left:9px;white-space:nowrap">字数: 899</span><span class="thin"></span>
  <button class="d-flex align-items-center" style="gap:3px;height:24px;padding:0 3px 0 4px;background:#e8f0fc"><svg width="15" height="14"><path d="M6 .5H.5v12H6l1.500 1 1.500-1h5.500V.5H9L7.500 1.500zM4.500 6L7 8.500 11 4" stroke-width="1.200"/></svg>拼写检查</button>
  <span class="dd"><svg width="5" height="3"><use href="#car"/></svg></span><span class="thin"></span>
  <button class="d-flex align-items-center" style="gap:3px;padding:0 4px"><svg width="15" height="14"><path d="M4 12.500H.5V.5H6l1.500 1L9 .5h5.500V6" stroke-width="1.200"/><circle cx="8.500" cy="7.500" r="3.500" fill="#dfe1e5"/><path d="M11 10l4 4" stroke-width="1.300"/></svg>内容检查</button>
  <span class="dd"><svg width="5" height="3"><use href="#car"/></svg></span><span class="thin"></span>
  <div class="d-flex align-items-center ms-auto" style="padding-right:111px">
    <button class="ib" aria-label="护眼模式"><svg width="16" height="14"><path d="M.5 8.500C4 3 12 3 15.500 8.500 12 14.500 4 14.500.5 8.500zM8 0v2.500M2.500 1.500L4 4M13.500 1.500L12 4"/><circle cx="8" cy="8.500" r="3"/></svg></button>
    <span class="thin" style="margin:0 10px 0 8px"></span>
    <button class="ib on" aria-label="页面视图"><svg width="14" height="14"><path d="M.5.5h9l4 4v9H.5zM3.500 5h5M3.500 8h7M3.500 11h7" stroke-width="1.300"/></svg></button>
    <button class="ib" aria-label="大纲"><svg width="14" height="14"><path d="M0 1.500h2M4 1.500h10M3 5h2M6.500 5H14M3 9h2M6.500 9H14M0 12.500h2M4 12.500h10" stroke-width="1.200"/></svg></button>
    <button class="ib" aria-label="阅读版式"><svg width="15" height="14"><path d="M6 .5H.5v12H6l1.500 1 1.500-1h5.500V.5H9L7.500 2zM7.500 2v11" stroke-width="1.200"/></svg></button>
    <button class="ib" aria-label="Web版式"><svg width="15" height="15"><circle cx="7.500" cy="7.500" r="7"/><ellipse cx="7.500" cy="7.500" rx="3.500" ry="7"/><path d="M1 5h13M1 10h13" stroke-width="1.200"/></svg></button>
    <button class="ib" aria-label="写作模式"><svg width="16" height="15"><path d="M.5 14.500h15M1 12l2-5 8-6.500L14.500 3 7 10.500zM3 7l4 3.500" stroke-width="1.200"/></svg></button>
    <span class="thin" style="margin:0 9px"></span>
    <button class="ib" aria-label="最佳显示比例"><svg width="14" height="14"><path d="M.5 4V.5H4M10 .5h3.500V4M13.500 10v3.500H10M4 13.500H.5V10M3.500 3.500h7v7h-7z" stroke-width="1.200"/></svg></button>
    <button class="lab" style="margin:0 13px 0 2px">44%<svg width="5" height="3"><use href="#car"/></svg></button>
    <button aria-label="缩小"><svg width="10" height="2"><path d="M0 1h10" stroke-width="2"/></svg></button>
    <input class="zoom" type="range" min="0" max="100" value="26" aria-label="显示比例">
  </div>
</footer>

<div class="meter d-flex align-items-center">
  <div class="speeds">
    <div class="d-flex align-items-center"><svg width="7" height="6"><path d="M3.500 6V0M.5 3l3-2.500 3 2.500" stroke="#4fb4f5" stroke-width="1.600"/></svg><span>0.3<em>K/s</em></span></div>
    <div class="d-flex align-items-center"><svg width="7" height="6"><path d="M3.500 0v6M.5 3l3 2.500 3-2.500" stroke="#2fb84a" stroke-width="1.600"/></svg><span>0.3<em>K/s</em></span></div>
  </div>
  <div class="ball">71<small>%</small>
    <svg width="52" height="52"><defs><linearGradient id="arc" x1="0" y1="1" x2="0" y2="0"><stop offset="0" stop-color="#c9dc5a"/><stop offset=".4" stop-color="#7fdc92"/><stop offset="1" stop-color="#3fdbd2"/></linearGradient></defs><path d="M26 1a25 25 0 0 1 0 50" stroke="url(#arc)" stroke-width="1.600"/><path d="M26 51A25 25 0 0 1 2 32" stroke="#e3b04a" stroke-width="1.600"/></svg></div>
</div>

<div class="mark-box">
  <div class="ime"></div>
  <span class="mark-name">极光下载站</span><span class="mark-url">www.xz7.com</span>
  <svg width="46" height="52" class="position-absolute start-0 top-0"><path d="M44 2C24-1 6 10 1 24c-1 6 2 9 7 10-2-10 6-22 36-32z" fill="#5a9fdc" stroke="none"/><path d="M12 18C20 8 34 8 40 16c3 9-5 20-20 24 12-8 19-15 13-21-5-5-13-5-21-1z" fill="#6cc48d" stroke="none"/><path d="M6 36c10 4 22 0 31-9-4 11-17 18-31 9z" fill="#e7df45" stroke="none"/><path d="M7 23l24-5 5 7-1 18-24 8-4-9z" fill="#f4511e" stroke="none"/><path d="M29 25c-7-3-16 0-14 5s15 1 15 7-10 7-16 4" stroke="#fff" stroke-width="4"/></svg>
  <div class="ime-keys d-flex align-items-center"><span>中</span>
    <svg width="14" height="12"><circle cx="3" cy="3" r="2" stroke="#1673dc" stroke-width="1.500"/><path d="M11 7c1 2 0 4-2 5" stroke="#1673dc" stroke-width="2.500"/></svg>
    <svg width="11" height="16"><rect x="3" width="5" height="10" rx="2.500" fill="#1673dc" stroke="none"/><path d="M.5 7a5 5 0 0 0 10 0M5.500 12v3.500M2.500 15.500h6" stroke="#1673dc" stroke-width="1.500"/></svg>
    <svg width="16" height="13"><rect x=".7" y=".7" width="14.600" height="11.600" rx="1" stroke="#1673dc" stroke-width="1.500"/><path d="M3 4h10M3 6.500h10" stroke="#1673dc" stroke-width="1.500" stroke-dasharray="1.500 1.300"/><path d="M4 9.500h8" stroke="#1673dc" stroke-width="1.500"/></svg>
    <svg width="13" height="13"><path d="M0 0h6v6H0zM7.500 0h5.500v6H7.500zM0 7.500h6V13H0zM7.500 7.500H13V13H7.500z" fill="#1673dc" stroke="none"/></svg>
  </div>
</div>
</div>
</body>
</html>
